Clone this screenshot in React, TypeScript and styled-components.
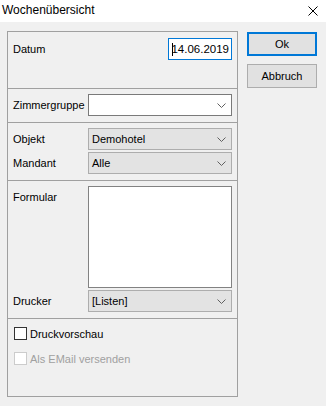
import React from 'react'
import styled, { createGlobalStyle } from 'styled-components'

const GlobalStyle = createGlobalStyle`
  html, body {
    margin: 0;
    padding: 0;
    background: #f0f0f0;
  }
  body {
    font-family: "Liberation Sans", Arial, sans-serif;
    font-size: 11px;
    color: #000;
  }
`

const StyledWindow = styled.div`
  width: 326px;
  height: 406px;
  background: #f0f0f0;
  display: flex;
  flex-direction: column;
  overflow: hidden;
`

const StyledTitleBar = styled.div`
  height: 22px;
  background: #fff;
  display: flex;
  align-items: center;
  justify-content: space-between;
  padding: 0 8px 0 2px;
  flex-shrink: 0;
`

const StyledTitle = styled.span`
  font-size: 12px;
  margin-top: -2px;
`

const StyledBody = styled.div`
  display: flex;
  gap: 9px;
  padding: 9px 0 0 7px;
`

const StyledPanel = styled.div`
  width: 231px;
  height: 366px;
  box-sizing: border-box;
  border: 1px solid #a0a0a0;
  display: flex;
  flex-direction: column;
`

const StyledSection = styled.div<{ $height?: number; $last?: boolean; $top?: number }>`
  display: flex;
  flex-direction: column;
  gap: 2px;
  box-sizing: border-box;
  padding: ${p => (p.$top ?? 5)}px 5px 0 5px;
  height: ${p => (p.$height ? `${p.$height}px` : 'auto')};
  flex: ${p => (p.$last ? '1' : 'none')};
  border-bottom: ${p => (p.$last ? 'none' : '1px solid #a0a0a0')};
`

const StyledRow = styled.div<{ $top?: boolean }>`
  display: flex;
  align-items: ${p => (p.$top ? 'flex-start' : 'center')};
`

const StyledLabel = styled.span<{ $top?: boolean }>`
  width: 75px;
  flex-shrink: 0;
  padding-top: ${p => (p.$top ? '5px' : '0')};
`

const StyledDateField = styled.div`
  margin-left: auto;
  width: 64px;
  height: 22px;
  box-sizing: border-box;
  border: 1px solid #0078d7;
  background: #fff;
  display: flex;
  align-items: center;
  justify-content: flex-end;
  padding-right: 2px;
  font-size: 11.5px;
  position: relative;
`

const StyledCaret = styled.span`
  position: absolute;
  left: 3px;
  top: 4px;
  width: 1px;
  height: 13px;
  background: #000;
`

const StyledCombo = styled.div<{ $gray?: boolean }>`
  flex: 1;
  height: 22px;
  box-sizing: border-box;
  border: 1px solid ${p => (p.$gray ? '#adadad' : '#7a7a7a')};
  background: ${p => (p.$gray ? '#e3e3e3' : '#fff')};
  display: flex;
  align-items: center;
  padding: 0 5px 0 3px;
`

const StyledComboText = styled.span`
  flex: 1;
`

const StyledList = styled.div`
  flex: 1;
  height: 102px;
  box-sizing: border-box;
  border: 1px solid #828282;
  background: #fff;
`

const StyledCheckRow = styled.label<{ $disabled?: boolean }>`
  display: flex;
  align-items: center;
  height: 23px;
  padding-left: 1px;
  color: ${p => (p.$disabled ? '#a0a0a0' : '#000')};
`

const StyledBox = styled.span<{ $disabled?: boolean }>`
  width: 13px;
  height: 13px;
  box-sizing: border-box;
  border: 1px solid ${p => (p.$disabled ? '#cccccc' : '#333333')};
  background: #fff;
  margin-right: 3px;
`

const StyledButtons = styled.div`
  display: flex;
  flex-direction: column;
  gap: 8px;
  padding-top: 1px;
`

const StyledButton = styled.button<{ $default?: boolean }>`
  width: 70px;
  height: 24px;
  box-sizing: border-box;
  font: inherit;
  color: #000;
  background: #e1e1e1;
  border: ${p => (p.$default ? '2px solid #0078d7' : '1px solid #adadad')};
  padding: 0;
  cursor: pointer;
  outline: none;
`

const Chevron = () => (
  <svg width="9" height="5" viewBox="0 0 9 5">
    <path d="M0.5 0.5 L4.5 4.5 L8.5 0.5" fill="none" stroke="#606060" strokeWidth="1" />
  </svg>
)

const CloseIcon = () => (
  <svg width="10" height="10" viewBox="0 0 10 10">
    <path d="M0.5 0.5 L9.5 9.5 M9.5 0.5 L0.5 9.5" stroke="#000" strokeWidth="1" />
  </svg>
)

interface IComboProps {
  value?: string
  gray?: boolean
}

const Combo: React.FunctionComponent<IComboProps> = ({ value, gray }) => (
  <StyledCombo $gray={gray}>
    <StyledComboText>{value}</StyledComboText>
    <Chevron />
  </StyledCombo>
)

const App: React.FunctionComponent = () => {
  return (
    <StyledWindow>
      <GlobalStyle />
      <StyledTitleBar>
        <StyledTitle>Wochenübersicht</StyledTitle>
        <CloseIcon />
      </StyledTitleBar>
      <StyledBody>
        <StyledPanel>
          <StyledSection $height={57} $top={6}>
            <StyledRow>
              <StyledLabel>Datum</StyledLabel>
              <StyledDateField>
                <StyledCaret />
                14.06.2019
              </StyledDateField>
            </StyledRow>
          </StyledSection>
          <StyledSection $height={34}>
            <StyledRow>
              <StyledLabel>Zimmergruppe</StyledLabel>
              <Combo />
            </StyledRow>
          </StyledSection>
          <StyledSection $height={58}>
            <StyledRow>
              <StyledLabel>Objekt</StyledLabel>
              <Combo value="Demohotel" gray />
            </StyledRow>
            <StyledRow>
              <StyledLabel>Mandant</StyledLabel>
              <Combo value="Alle" gray />
            </StyledRow>
          </StyledSection>
          <StyledSection $height={138}>
            <StyledRow $top>
              <StyledLabel $top>Formular</StyledLabel>
              <StyledList />
            </StyledRow>
            <StyledRow>
              <StyledLabel>Drucker</StyledLabel>
              <Combo value="[Listen]" gray />
            </StyledRow>
          </StyledSection>
          <StyledSection $last $top={3}>
            <StyledCheckRow>
              <StyledBox />
              Druckvorschau
            </StyledCheckRow>
            <StyledCheckRow $disabled>
              <StyledBox $disabled />
              Als EMail versenden
            </StyledCheckRow>
          </StyledSection>
        </StyledPanel>
        <StyledButtons>
          <StyledButton $default>Ok</StyledButton>
          <StyledButton>Abbruch</StyledButton>
        </StyledButtons>
      </StyledBody>
    </StyledWindow>
  )
}

export default App
